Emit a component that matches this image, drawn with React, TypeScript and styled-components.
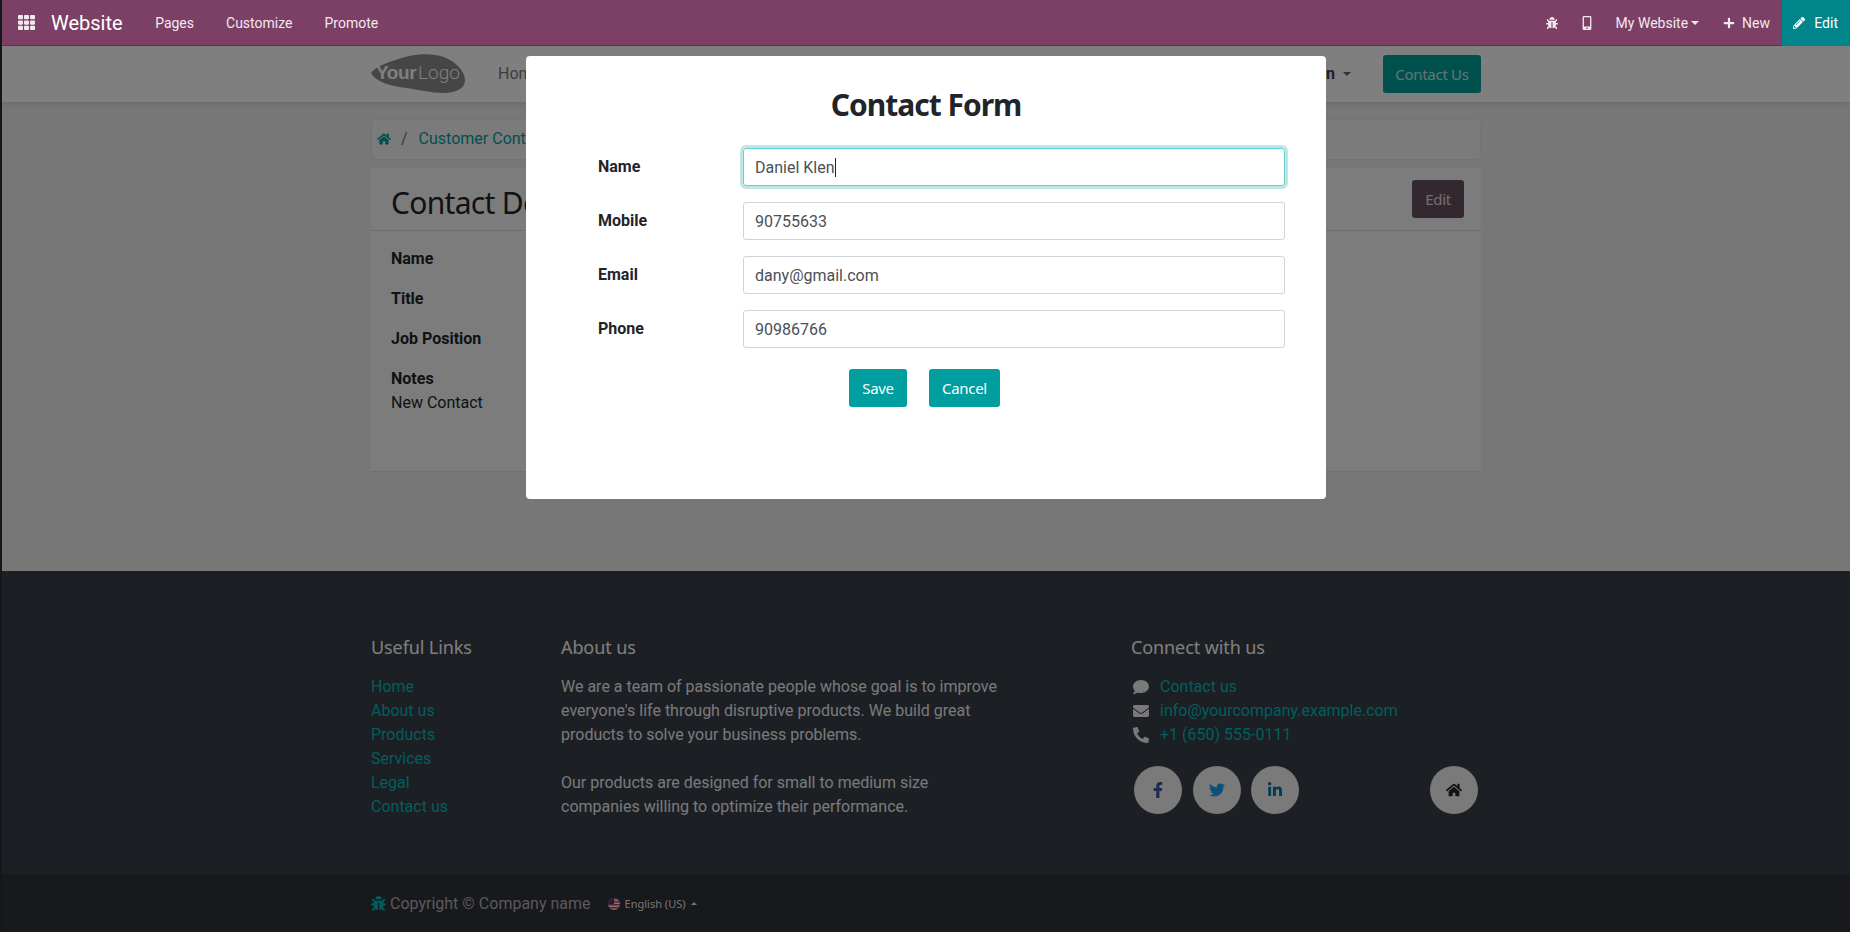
import React from 'react'
import styled, { createGlobalStyle } from 'styled-components'
import {
  FaBug, FaComment, FaEnvelope, FaFacebookF, FaHome, FaLinkedinIn, FaMobileAlt,
  FaPencilAlt, FaPhoneAlt, FaPlus, FaTh, FaTwitter
} from 'react-icons/fa'

const GlobalStyle = createGlobalStyle`
  html, body { margin: 0; padding: 0; height: 932px; overflow: hidden; background: #14181a; }
  body { font-family: Roboto, "Liberation Sans", sans-serif; font-size: 16px; line-height: 24px; color: #212529; }
  * { box-sizing: border-box; }
`

const heading = '"Noto Sans", "Open Sans", sans-serif'

const Page = styled.div`
  margin-left: 2px;
  height: 932px;
  position: relative;
  display: flex;
  flex-direction: column;
`

const Toolbar = styled.div`
  position: relative;
  z-index: 3;
  height: 46px;
  flex: none;
  display: flex;
  align-items: center;
  background: #7c3f66;
  border-bottom: 1px solid #5f2f50;
  color: #f2e9ef;
  font-size: 14px;
`

const AppsIcon = styled(FaTh)`
  width: 17px;
  height: 17px;
  margin-left: 16px;
`

const Brand = styled.div`
  margin-left: 16px;
  margin-right: 32.5px;
  font-size: 20px;
  font-weight: 400;
  color: #fff;
`

const MenuItem = styled.div<{ $gap?: number }>`
  display: flex;
  align-items: center;
  margin-right: ${p => p.$gap ?? 32}px;
  white-space: nowrap;
  svg { display: block; }
`

const PlusIcon = styled(FaPlus)`
  width: 12px;
  height: 12px;
  margin-right: 7px;
`

const Spacer = styled.div`
  flex: 1;
`

const Caret = styled.span<{ $up?: boolean }>`
  display: inline-block;
  margin-left: 3px;
  border-left: 4px solid transparent;
  border-right: 4px solid transparent;
  ${p => (p.$up ? 'border-bottom: 4px solid currentColor;' : 'border-top: 4px solid currentColor;')}
`

const EditTab = styled.div`
  width: 68px;
  height: 46px;
  background: #00868a;
  color: #fff;
  display: flex;
  align-items: center;
  justify-content: flex-end;
  gap: 9px;
  padding-right: 12px;
  margin-bottom: -1px;
`

const Header = styled.header`
  position: relative;
  z-index: 1;
  height: 56px;
  flex: none;
  background: #fff;
  box-shadow: 0 2px 6px rgba(0, 0, 0, .12);
`

const Container = styled.div`
  width: 1110px;
  margin: 0 auto;
`

const Nav = styled(Container)`
  height: 100%;
  display: flex;
  align-items: center;
`

const NavLink = styled.span`
  margin-left: 31px;
  color: #7c7c7c;
`

const UserMenu = styled.span`
  font-weight: 700;
  color: #444;
  display: flex;
  align-items: center;
  margin-right: 32px;
  span { margin-left: 8px; color: #666; }
`

const CtaButton = styled.div`
  width: 98px;
  height: 38px;
  background: #00a09d;
  border-radius: 3px;
  color: #c9e9e8;
  font-family: ${heading};
  font-size: 15px;
  letter-spacing: -.3px;
  display: flex;
  align-items: center;
  justify-content: center;
`

const Main = styled.main`
  height: 469px;
  flex: none;
  padding-top: 17px;
  background: #efefef;
`

const Breadcrumb = styled.div`
  height: 41px;
  display: flex;
  align-items: center;
  padding: 0 0 2px 5px;
  background: #f6f6f6;
  border: 1px solid #e6e6e6;
  border-radius: 4px;
  color: #00a09d;
  svg { width: 14px; height: 14px; }
`

const Slash = styled.span`
  margin: 0 11px 0 10px;
  color: #6c757d;
`

const Card = styled.div`
  margin-top: 8px;
  height: 304px;
  background: #f8f8f8;
  border-bottom: 1px solid #e0e0e0;
`

const CardHead = styled.div`
  height: 63px;
  display: flex;
  align-items: flex-start;
  justify-content: space-between;
  padding: 12px 17px 0 20px;
  border-bottom: 1px solid #dcdcdc;
`

const CardTitle = styled.h2`
  margin: 4px 0 0;
  font-family: ${heading};
  font-weight: 400;
  font-size: 30px;
  letter-spacing: -.7px;
  line-height: 38px;
  color: #212529;
`

const GhostButton = styled.div`
  width: 52px;
  height: 38px;
  background: #66505f;
  border-radius: 3px;
  color: #e6dde5;
  font-family: ${heading};
  font-size: 15px;
  letter-spacing: -.3px;
  display: flex;
  align-items: center;
  justify-content: center;
`

const CardBody = styled.div`
  padding: 16px 20px;
`

const FieldLabel = styled.div<{ $tight?: boolean }>`
  font-weight: 700;
  margin-bottom: ${p => (p.$tight ? 0 : 16)}px;
`

const Footer = styled.footer`
  height: 303px;
  flex: none;
  padding-top: 64px;
  background: #383e48;
  color: #f2f2f2;
`

const FooterGrid = styled(Container)`
  display: grid;
  grid-template-columns: 190px 570px 350px;
`

const FooterTitle = styled.h5`
  margin: 0 0 16px;
  font-family: ${heading};
  font-weight: 400;
  font-size: 18px;
  letter-spacing: -.1px;
  line-height: 24px;
  color: #fff;
`

const LinkList = styled.div`
  display: flex;
  flex-direction: column;
  color: #00bcbe;
`

const Paragraph = styled.p<{ $last?: boolean }>`
  margin: 0 0 ${p => (p.$last ? 0 : 24)}px;
  max-width: 445px;
`

const ContactRow = styled.div`
  display: flex;
  align-items: center;
  color: #00bcbe;
  svg { width: 16px; height: 16px; margin: 0 11px 0 2px; color: #f2f2f2; flex: none; }
`

const SocialRow = styled.div`
  margin-top: 19px;
  padding: 0 3px;
  display: flex;
  gap: 10.5px;
`

const Circle = styled.div<{ $color: string; $push?: boolean }>`
  width: 48px;
  height: 48px;
  border-radius: 50%;
  background: #f4f4f4;
  color: ${p => p.$color};
  display: flex;
  align-items: center;
  justify-content: center;
  ${p => (p.$push ? 'margin-left: auto;' : '')}
  svg { width: 16px; height: 16px; }
`

const Copyright = styled.div`
  height: 58px;
  flex: none;
  padding-top: 1px;
  background: #2e3239;
  color: #b4b4b4;
`

const CopyrightRow = styled(Container)`
  height: 100%;
  display: flex;
  align-items: center;
  svg.bug { width: 15px; height: 15px; color: #00bcbe; margin-right: 4px; }
`

const Language = styled.span`
  margin-left: 17px;
  display: flex;
  align-items: center;
  font-size: 11px;
  color: #e6e6e6;
  font-family: ${heading};
  svg { margin-right: 5px; }
  span {
    margin-left: 5px;
    border-left-width: 3px;
    border-right-width: 3px;
    border-bottom-width: 3px;
  }
`

const Backdrop = styled.div`
  position: absolute;
  inset: 0;
  z-index: 2;
  background: rgba(0, 0, 0, .5);
  display: flex;
  justify-content: center;
  align-items: flex-start;
  padding-top: 56px;
`

const Modal = styled.div`
  width: 800px;
  height: 443px;
  background: #fff;
  border-radius: 4px;
  padding: 30px 41px 0 72px;
`

const ModalTitle = styled.h3`
  margin: 0 0 24px -31px;
  text-align: center;
  font-family: ${heading};
  font-size: 30px;
  font-weight: 700;
  letter-spacing: -1px;
  line-height: 38px;
  color: #212529;
`

const FormRow = styled.div`
  display: grid;
  grid-template-columns: 145px 542px;
  margin-bottom: 16px;
`

const RowLabel = styled.label`
  font-weight: 700;
  padding-top: 7px;
  color: #212529;
`

const Input = styled.div<{ $focused?: boolean }>`
  height: 38px;
  display: flex;
  align-items: center;
  padding: 1px 11px 0;
  border-radius: 3px;
  color: #495057;
  border: 1px solid ${p => (p.$focused ? '#5dd3d3' : '#ced4da')};
  ${p => (p.$focused ? 'box-shadow: 0 0 0 3px rgba(0, 160, 157, .25);' : '')}
`

const TextCursor = styled.span`
  width: 1px;
  height: 19px;
  background: #212529;
`

const Actions = styled.div`
  display: flex;
  gap: 22px;
  margin-top: 21px;
  padding-left: 251px;
`

const ModalButton = styled.button<{ $width: number }>`
  width: ${p => p.$width}px;
  height: 38px;
  padding: 0;
  border: none;
  border-radius: 3px;
  background: #009e9e;
  color: #fff;
  font-family: ${heading};
  font-size: 15px;
  letter-spacing: -.3px;
`

const usefulLinks = ['Home', 'About us', 'Products', 'Services', 'Legal', 'Contact us']
const fields = [
  { label: 'Name', value: 'Daniel Klen', focused: true },
  { label: 'Mobile', value: '90755633' },
  { label: 'Email', value: 'dany@gmail.com' },
  { label: 'Phone', value: '90986766' }
]

function Logo () {
  return (
    <svg width='96' height='40' viewBox='0 0 96 40'>
      <path d='M0 19 C6 11 20 7 38 2 C56 -2 76 0 87 12 C97 22 97 35 82 38 C68 41 50 36 36 34 C20 32 6 29 0 19 Z' fill='#8c8c8c' />
      <text x='5' y='25' fontFamily='"Liberation Sans", sans-serif' fontWeight='700' fontSize='19' letterSpacing='-0.4' fill='#fff'>Your</text>
      <text x='47' y='25' fontFamily='Roboto, sans-serif' fontWeight='300' fontSize='19' fill='#fff'>Logo</text>
    </svg>
  )
}

function UsFlag () {
  return (
    <svg width='12' height='12' viewBox='0 0 12 12'>
      <defs><clipPath id='flag'><circle cx='6' cy='6' r='6' /></clipPath></defs>
      <g clipPath='url(#flag)'>
        <rect width='12' height='12' fill='#f0f0f0' />
        <rect y='0' width='12' height='1.5' fill='#d0354a' />
        <rect y='3' width='12' height='1.5' fill='#d0354a' />
        <rect y='6' width='12' height='1.5' fill='#d0354a' />
        <rect y='9' width='12' height='1.5' fill='#d0354a' />
        <rect width='6' height='6' fill='#3c3f78' />
      </g>
    </svg>
  )
}

export default function App () {
  return (
    <>
      <GlobalStyle />
      <Page>
        <Toolbar>
          <AppsIcon />
          <Brand>Website</Brand>
          <MenuItem>Pages</MenuItem>
          <MenuItem>Customize</MenuItem>
          <MenuItem>Promote</MenuItem>
          <Spacer />
          <MenuItem $gap={22}><FaBug size={12} /></MenuItem>
          <MenuItem $gap={22}><FaMobileAlt size={14} /></MenuItem>
          <MenuItem $gap={24}>My Website<Caret /></MenuItem>
          <MenuItem $gap={12}><PlusIcon />New</MenuItem>
          <EditTab><FaPencilAlt size={12} />Edit</EditTab>
        </Toolbar>
        <Header>
          <Nav>
            <Logo />
            <NavLink>Home</NavLink>
            <Spacer />
            <UserMenu>Admin<Caret /></UserMenu>
            <CtaButton>Contact Us</CtaButton>
          </Nav>
        </Header>
        <Main>
          <Container>
            <Breadcrumb>
              <FaHome />
              <Slash>/</Slash>
              Customer Contacts
            </Breadcrumb>
            <Card>
              <CardHead>
                <CardTitle>Contact Details</CardTitle>
                <GhostButton>Edit</GhostButton>
              </CardHead>
              <CardBody>
                <FieldLabel>Name</FieldLabel>
                <FieldLabel>Title</FieldLabel>
                <FieldLabel>Job Position</FieldLabel>
                <FieldLabel $tight>Notes</FieldLabel>
                <div>New Contact</div>
              </CardBody>
            </Card>
          </Container>
        </Main>
        <Footer>
          <FooterGrid>
            <div>
              <FooterTitle>Useful Links</FooterTitle>
              <LinkList>
                {usefulLinks.map(link => <span key={link}>{link}</span>)}
              </LinkList>
            </div>
            <div>
              <FooterTitle>About us</FooterTitle>
              <Paragraph>We are a team of passionate people whose goal is to improve everyone's life through disruptive products. We build great products to solve your business problems.</Paragraph>
              <Paragraph $last>Our products are designed for small to medium size companies willing to optimize their performance.</Paragraph>
            </div>
            <div>
              <FooterTitle>Connect with us</FooterTitle>
              <ContactRow><FaComment />Contact us</ContactRow>
              <ContactRow><FaEnvelope />info@yourcompany.example.com</ContactRow>
              <ContactRow><FaPhoneAlt />+1 (650) 555-0111</ContactRow>
              <SocialRow>
                <Circle $color='#3b5998'><FaFacebookF /></Circle>
                <Circle $color='#1da1f2'><FaTwitter /></Circle>
                <Circle $color='#0077b5'><FaLinkedinIn /></Circle>
                <Circle $color='#212529' $push><FaHome /></Circle>
              </SocialRow>
            </div>
          </FooterGrid>
        </Footer>
        <Copyright>
          <CopyrightRow>
            <FaBug className='bug' />
            Copyright © Company name
            <Language><UsFlag />English (US)<Caret $up /></Language>
          </CopyrightRow>
        </Copyright>
        <Backdrop>
          <Modal>
            <ModalTitle>Contact Form</ModalTitle>
            {fields.map(field => (
              <FormRow key={field.label}>
                <RowLabel>{field.label}</RowLabel>
                <Input $focused={field.focused}>
                  {field.value}
                  {field.focused && <TextCursor />}
                </Input>
              </FormRow>
            ))}
            <Actions>
              <ModalButton $width={58}>Save</ModalButton>
              <ModalButton $width={71}>Cancel</ModalButton>
            </Actions>
          </Modal>
        </Backdrop>
      </Page>
    </>
  )
}
